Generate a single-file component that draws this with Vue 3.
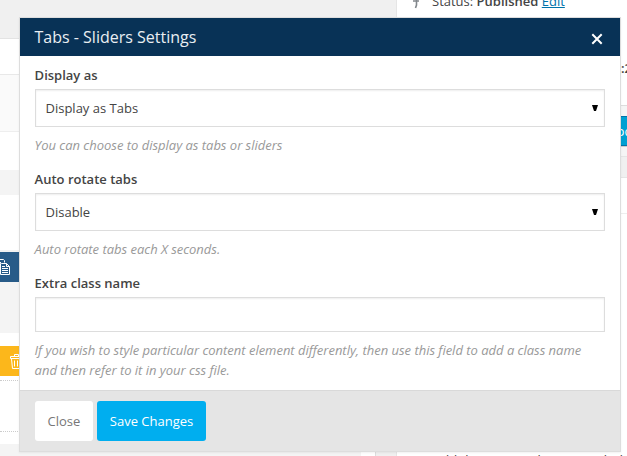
<script setup>
import { ref } from 'vue'

const fields = ref([
  { label: 'Display as', type: 'select', value: 'Display as Tabs', help: 'You can choose to display as tabs or sliders' },
  { label: 'Auto rotate tabs', type: 'select', value: 'Disable', help: 'Auto rotate tabs each X seconds.' },
  { label: 'Extra class name', type: 'text', value: '', help: 'If you wish to style particular content element differently, then use this field to add a class name and then refer to it in your css file.' },
])
</script>

<template>
  <div class="page">
    <div class="main">
      <div class="gap-top"></div>
      <div class="title-row"></div>
      <div class="toolbar-row"></div>
      <div class="blank-row"></div>
      <div class="band"></div>
      <div class="panel"></div>
      <div class="tile blue">
        <svg width="10" height="16" viewBox="0 0 10 16" fill="none" stroke="#fff">
          <path d="M0 .5H3.500L4.500 1.500V3.500M0 3.500H1M1.500 4.500H6.500L9.500 7.500V15.500H.5V4.500Z" />
          <path d="M6.500 4.500V7.500H9.500M2 7.500H5M2 9.500H8M2 11.500H8M2 13.500H8" />
        </svg>
      </div>
      <div class="grey-row"></div>
      <div class="white-row"></div>
      <div class="tile yellow">
        <svg width="12" height="16" viewBox="0 0 12 16" fill="none" stroke="#fff">
          <path d="M.5 4.500V2.500H11.500V4.500H.5M4.500 2.500V.5H8.500V2.500M1.500 5L2.500 14.500H10L11 5M4.500 6.500V12.500M7.500 6.500V12.500" />
        </svg>
      </div>
      <div class="dotted"></div>
      <div class="drop"></div>
      <div class="after-drop"></div>
      <div class="bottom"></div>
    </div>
    <div class="side">
      <div class="publish">
        <div class="status">
          <svg width="8" height="12" viewBox="0 0 8 12" fill="none" stroke="#82878c" stroke-width="1.600">
            <path d="M0 4H6M3.500 0V8L2.500 11" />
          </svg>
          <span>Status: <b>Published</b> <a>Edit</a></span>
        </div>
        <div class="time">:2</div>
      </div>
      <div class="actions"><div class="update">Update</div></div>
      <div class="side-gap"></div>
      <div class="side-title"></div>
      <div class="side-body">
        <div class="side-text">Add the options that you include the</div>
      </div>
    </div>

    <section class="modal">
      <header class="head">
        <h2>Tabs - Sliders Settings</h2>
        <svg class="close" width="12" height="12" viewBox="0 0 12 12" stroke="#fff" stroke-width="2">
          <path d="M1.300 1.300L10.700 10.700M10.700 1.300L1.300 10.700" />
        </svg>
      </header>
      <div class="body">
        <div v-for="f in fields" :key="f.label" class="field">
          <label>{{ f.label }}</label>
          <div class="control" :class="f.type">
            <span>{{ f.value }}</span>
            <svg v-if="f.type === 'select'" width="6" height="6" viewBox="0 0 6 6">
              <path d="M0 0H6L4 6H2Z" fill="#000" />
            </svg>
          </div>
          <p>{{ f.help }}</p>
        </div>
      </div>
      <footer class="foot">
        <button class="btn">Close</button>
        <button class="btn primary">Save Changes</button>
      </footer>
    </section>
  </div>
</template>

<style>
body { background: #f1f1f1; }
</style>

<style scoped>
* { box-sizing: border-box; }
.page {
  position: relative;
  display: flex;
  width: 627px;
  height: 456px;
  overflow: hidden;
  background: #f0f0f0;
  font-family: "Open Sans", sans-serif;
  font-size: 13px;
  color: #444;
}
.main { width: 376px; flex: none; display: flex; flex-direction: column; margin-right: 20px; }
.main > div { flex: none; }
.gap-top { height: 38px; }
.title-row { height: 37px; background: #fff; border-top: 1px solid #e3e3e3; border-bottom: 1px solid #e8e8e8; }
.toolbar-row { height: 57px; background: #fafafa; border-bottom: 1px solid #eee; }
.blank-row { height: 38px; background: #fff; }
.band { height: 25px; background: #f4f4f4; }
.panel { height: 57px; background: #fff; border-bottom: 2px solid #f2f2f2; }
.tile { height: 30px; }
.tile svg { display: block; }
.blue { background: #285b88; padding: 7px 0 0; }
.grey-row { height: 51px; background: #f4f4f4; }
.white-row { height: 13px; background: #fff; }
.yellow { background: #fcb71b; padding: 8px 0 0 10px; }
.dotted { height: 5px; background: #fff; border-bottom: 1px dotted #ccc; }
.drop { height: 51px; background: #fff; border-bottom: 1px dotted #ccc; }
.after-drop { height: 12px; background: #fff; }
.bottom { height: 12px; background: #f4f4f4; border-right: 1px solid #ddd; box-shadow: inset -14px 0 #fff; }

.side { width: 231px; flex: none; border-left: 1px solid #e5e5e5; background: #fff; }
.publish { height: 106px; border-bottom: 1px solid #ddd; padding: 0 0 0 16px; }
.status { display: flex; height: 12px; align-items: flex-start; gap: 11px; line-height: 18px; white-space: nowrap; }
.status svg { margin-top: -3px; }
.status span { margin-top: -8px; }
.status b { font-weight: 600; }
.status a { color: #0073aa; text-decoration: underline; }
.time { width: 20px; margin: 47px 0 0 208px; line-height: 18px; font-weight: 600; }
.actions { height: 51px; padding: 10px 0 0 190px; background: #f5f5f5; border-bottom: 1px solid #e5e5e5; }
.update { width: 68px; height: 30px; padding-left: 19px; background: #00a0d2; border: 1px solid #0073aa; box-shadow: 0 1px 0 #ccc; color: #fff; line-height: 29px; }
.side-gap { height: 20px; background: #f0f0f0; }
.side-title { height: 37px; border-top: 1px solid #e5e5e5; border-bottom: 1px solid #eee; }
.side-body { height: 242px; padding: 237px 0 0 36px; overflow: hidden; }
.side-text { line-height: 18px; white-space: nowrap; }

.modal {
  position: absolute;
  left: 19px;
  top: 17px;
  width: 602px;
  height: 435px;
  display: flex;
  flex-direction: column;
  background: #fff;
  border: 1px solid #ddd;
  box-shadow: 0 1px 2px rgba(0, 0, 0, .06);
}
.head { display: flex; justify-content: space-between; height: 38px; flex: none; padding: 0 17px 0 14.5px; background: #083256; color: #e9eef2; }
.head h2 { margin: 0; font-size: 16px; font-weight: 400; line-height: 38px; white-space: nowrap; }
.close { margin-top: 15px; }
.body { flex: 1; min-height: 0; padding: 9px 15px 0; }
.field { height: 104px; }
.field label { display: block; height: 24px; margin-left: -.4px; line-height: 20px; font-weight: 600; }
.control { display: flex; align-items: center; justify-content: space-between; border: 1px solid #ddd; background: #fff; box-shadow: inset 0 1px 2px rgba(0, 0, 0, .07); }
.select { height: 38px; padding: 0 6px 0 9.5px; }
.text { height: 35px; }
.field p { margin: 8px 0 0 -.4px; line-height: 20px; letter-spacing: -.014px; font-style: italic; color: #999; }
.foot { display: flex; gap: 4px; height: 61px; flex: none; padding: 10px 15px; border-top: 1px solid #d9d9d9; background: #e5e5e5; }
.btn { height: 40px; padding: 0 12.5px; border: 0; border-radius: 3px; background: #fff; color: #777; font: 13px/40px "Open Sans", sans-serif; white-space: nowrap; }
.primary { padding: 0 13px; background: #00aeef; color: #fff; }
</style>
